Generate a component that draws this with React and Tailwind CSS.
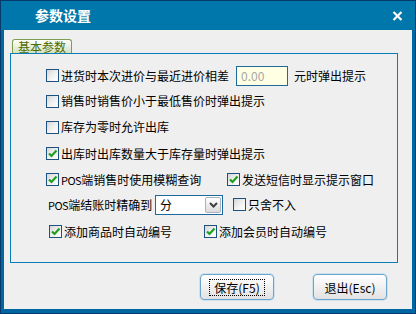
import React from "react";

const FONT = { fontFamily: '"Noto Sans CJK SC", "Noto Sans", sans-serif' };

function Check({ checked }) {
  return (
    <span className="flex h-[13px] w-[13px] shrink-0 items-center justify-center border border-[#1c5180] bg-gradient-to-br from-[#d6d6d6] via-[#f0f0f0] to-[#ffffff]">
      {checked && (
        <svg width="11" height="11" viewBox="0 0 11 11">
          <path d="M2 5.5 L4.5 8 L9.5 2.5" fill="none" stroke="#1ea01e" strokeWidth="2.2" />
        </svg>
      )}
    </span>
  );
}

function Pos() {
  return <span className="text-[11px] tracking-[-0.5px]">POS</span>;
}

function Option({ checked, label, className = "" }) {
  return (
    <label className={`flex items-center gap-[2px] ${className}`}>
      <Check checked={checked} />
      <span className="whitespace-nowrap">{label}</span>
    </label>
  );
}

function Button({ label, focused }) {
  return (
    <button className="flex h-[26px] w-[74px] items-center justify-center rounded-[4px] border border-[#6aa3cc] bg-gradient-to-b from-[#ffffff] to-[#e2e2e2] text-[12px] text-black shadow-[0_0_0_1px_#cde2f1]">
      <span className={`px-[4px] leading-[15px] ${focused ? "border border-dotted border-black" : "border border-transparent"}`}>
        {label}
      </span>
    </button>
  );
}

export default function App() {
  return (
    <div style={FONT} className="flex h-[314px] w-[416px] flex-col border border-[#063b6c] bg-[#0066a2] text-[12px] text-black">
      <div className="flex h-[29px] items-center justify-between bg-[#0077aa] pl-[34px] pr-[12px]">
        <span className="text-[14px] font-bold text-white">参数设置</span>
        <svg width="11" height="10" viewBox="0 0 11 10">
          <path d="M1.5 1 L9.5 9 M9.5 1 L1.5 9" stroke="#ffffff" strokeWidth="2.2" />
        </svg>
      </div>

      <div className="mx-[3px] mb-[4px] flex flex-1 flex-col bg-[#efefef] px-[6px] pt-[9px]">
        <div className="ml-[2px] flex h-[14px] w-[60px] items-center justify-center rounded-t-[3px] border border-b-0 border-[#7f9c52] bg-gradient-to-b from-[#ffffff] to-[#d3e2c1] text-[12px] leading-none text-[#4d6b00]">
          基本参数
        </div>

        <div className="flex h-[210px] w-[388px] flex-col border border-[#0a7cb8] pt-[9px]">
          <div className="flex h-[25px] items-center pl-[35px]">
            <Option label="进货时本次进价与最近进价相差" />
            <div className="ml-[7px] flex h-[20px] w-[52px] items-center border border-[#1a6aa0] bg-[#ffffe4] pl-[4px] text-[#a8a8a8]">
              0.00
            </div>
            <span className="ml-[6px] whitespace-nowrap">元时弹出提示</span>
          </div>

          <div className="flex h-[26px] items-center pl-[35px]">
            <Option label="销售时销售价小于最低售价时弹出提示" />
          </div>

          <div className="flex h-[26px] items-center pl-[35px]">
            <Option label="库存为零时允许出库" />
          </div>

          <div className="flex h-[27px] items-center pl-[35px]">
            <Option checked label="出库时出库数量大于库存量时弹出提示" />
          </div>

          <div className="flex h-[25px] items-center pl-[35px]">
            <Option checked label={<><Pos />端销售时使用模糊查询</>} className="w-[181px]" />
            <Option checked label="发送短信时显示提示窗口" />
          </div>

          <div className="flex h-[25px] items-center pl-[37px]">
            <span className="w-[107px] whitespace-nowrap"><Pos />端结账时精确到</span>
            <div className="flex h-[20px] w-[68px] items-center justify-between border border-[#1a6aa0] bg-white p-[1px]">
              <span className="pl-[3px]">分</span>
              <span className="flex h-[16px] w-[16px] items-center justify-center rounded-[2px] border border-[#a9b4c2] bg-gradient-to-b from-[#ffffff] to-[#dcdcdc]">
                <svg width="9" height="6" viewBox="0 0 9 6">
                  <path d="M1 1 L4.5 4.5 L8 1" fill="none" stroke="#404040" strokeWidth="2" />
                </svg>
              </span>
            </div>
            <Option label="只舍不入" className="ml-[10px]" />
          </div>

          <div className="flex h-[29px] items-center pl-[38px]">
            <Option checked label="添加商品时自动编号" className="w-[155px] gap-[1px]" />
            <Option checked label="添加会员时自动编号" className="gap-[1px]" />
          </div>
        </div>

        <div className="mt-[11px] flex justify-end gap-[39px] pr-[19px]">
          <Button label="保存(F5)" focused />
          <Button label="退出(Esc)" />
        </div>
      </div>
    </div>
  );
}
